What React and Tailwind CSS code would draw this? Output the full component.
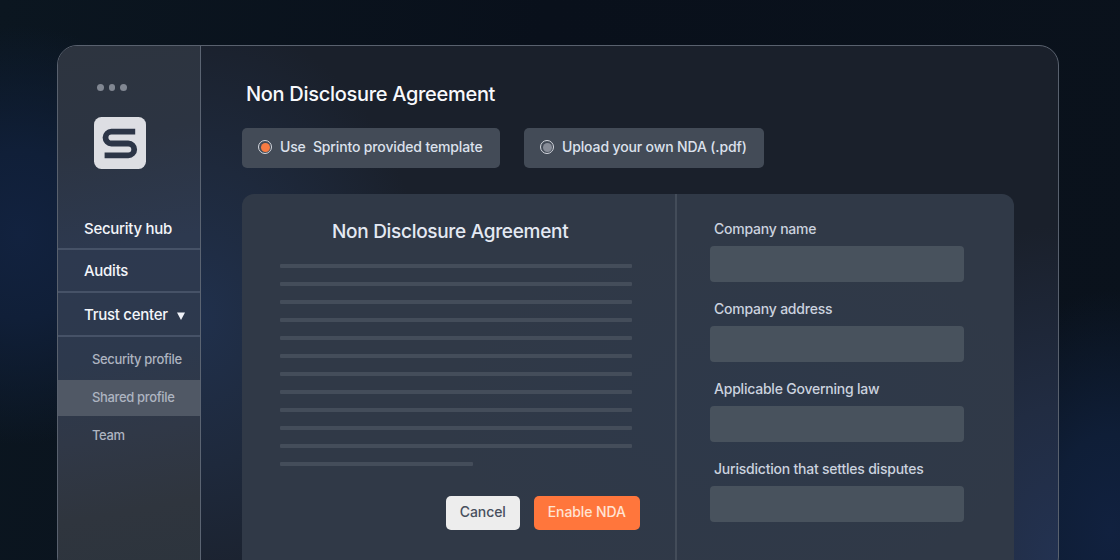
import React, { useState } from "react";

const navItems = ["Security hub", "Audits", "Trust center"];
const subItems = ["Security profile", "Shared profile", "Team"];
const fields = [
  "Company name",
  "Company address",
  "Applicable Governing law",
  "Jurisdiction that settles disputes",
];

const Logo = () => (
  <svg viewBox="0 0 52 52" className="ml-9 mt-[26px] block h-[52px] w-[52px]">
    <rect width="52" height="52" rx="7.5" fill="#dddee3" />
    <path
      d="M41.200 14.700H17.400a5.900 5.900 0 0 0 0 11.800H34.300a5.900 5.900 0 0 1 0 11.800H10.600"
      fill="none"
      stroke="#2c3547"
      strokeWidth="5.8"
    />
  </svg>
);

const Sidebar = ({ active, setActive }) => (
  <aside className="flex w-[143px] shrink-0 flex-col border-r border-[#5b6472] bg-[linear-gradient(170deg,#2d343f_0%,#2c3442_18%,#2d394f_38%,#2d394d_58%,#303847_72%,#2f353e_86%,#2c343d_100%)]">
    <div className="mt-[38px] ml-[39px] flex gap-[5px]">
      <span className="size-[6.5px] rounded-full bg-[#818792]" />
      <span className="size-[6.5px] rounded-full bg-[#818792]" />
      <span className="size-[6.5px] rounded-full bg-[#818792]" />
    </div>
    <Logo />
    <nav className="mt-[37px]">
      {navItems.map((item) => (
        <button
          key={item}
          className="flex h-11 w-full items-center border-b-2 border-[#465267] pt-1 pl-[26px] text-[15px] font-medium tracking-[-0.27px] text-[#f3f5fa] first:pt-[5px] nth-[2]:h-[43px] nth-[2]:pt-[2px]"
        >
          {item}
          {item === "Trust center" && (
            <svg viewBox="0 0 8 8" className="ml-[9px] mt-[1px] size-2">
              <path d="M0 0.5h8L4 8z" fill="#f0f2f8" />
            </svg>
          )}
        </button>
      ))}
    </nav>
    <div className="mt-[5px]">
      {subItems.map((item) => (
        <button
          key={item}
          onClick={() => setActive(item)}
          className={`mb-[2px] flex h-9 w-full items-center pl-[34px] text-[13px] font-medium tracking-[-0.35px] text-[#adb4c0] ${
            active === item ? "bg-[#505865]" : ""
          }`}
        >
          {item}
        </button>
      ))}
    </div>
  </aside>
);

const Option = ({ label, checked, onSelect, className }) => (
  <button
    onClick={onSelect}
    className={`flex h-10 items-center rounded-[5px] bg-[#434b57] pl-4 pb-[2px] text-sm font-medium text-[#dce1ec] ${className}`}
  >
    <span className="mr-2 flex size-[14px] shrink-0 items-center justify-center rounded-full border border-[#d5d8df]">
      <span className={`size-[9px] rounded-full ${checked ? "bg-[#f77b42]" : "bg-[#888d98]"}`} />
    </span>
    <span className="whitespace-pre">{label}</span>
  </button>
);

const Template = () => (
  <section className="w-[435px] shrink-0 border-r-2 border-[#434c59]">
    <h2 className="mt-6 ml-[90px] whitespace-nowrap text-[19px] leading-7 tracking-[-0.3px] font-medium text-[#e4e9f3]">
      Non Disclosure Agreement
    </h2>
    <div className="mt-[18px] ml-[38px] flex flex-col gap-[14px]">
      {Array.from({ length: 11 }).map((_, i) => (
        <div key={i} className="h-1 w-[352px] rounded-[1px] bg-[#444d5a]" />
      ))}
      <div className="h-1 w-[193px] rounded-[1px] bg-[#444d5a]" />
    </div>
    <div className="mt-[30px] mr-[35px] flex justify-end gap-[13.5px] text-sm font-medium tracking-[-0.1px]">
      <button className="h-[34px] w-[74.5px] rounded-[5px] bg-[#ededed] pb-[2px] text-[#474f5d]">
        Cancel
      </button>
      <button className="h-[34px] w-[106.5px] rounded-[5px] bg-[#ff763c] pb-[2px] text-[#ffe3d3]">
        Enable NDA
      </button>
    </div>
  </section>
);

const Details = () => (
  <section className="flex flex-col gap-4 pt-6 pl-[33px]">
    {fields.map((field) => (
      <label key={field} className="block text-sm tracking-[-0.22px] text-[#cbd2df]">
        <span className="block h-7 pl-1 leading-[22px] font-medium">{field}</span>
        <input className="block h-9 w-[254px] rounded-[4px] bg-[#48525d] px-3 outline-none" />
      </label>
    ))}
  </section>
);

const App = () => {
  const [active, setActive] = useState("Shared profile");
  const [source, setSource] = useState("template");

  return (
    <div className="h-[560px] w-[1120px] overflow-hidden bg-[#080f1a] bg-[radial-gradient(ellipse_180px_210px_at_20px_235px,#12223f_0%,#101f38_40%,transparent_100%),radial-gradient(ellipse_150px_240px_at_1110px_530px,#11213f_0%,#0f1e37_40%,transparent_100%),linear-gradient(100deg,#0b1620_0%,#09101b_45%,#0a121c_100%)] pt-[45px] pl-[57px] font-['Inter','Open_Sans',sans-serif]">
      <div className="flex h-[532px] w-[1002px] overflow-hidden rounded-[20px] border border-[#59616e] bg-[#1a202b] bg-[radial-gradient(ellipse_230px_300px_at_140px_270px,#20304c_0%,#1e293c_50%,transparent_100%),radial-gradient(ellipse_220px_330px_at_1000px_510px,#233251_0%,#212c42_45%,transparent_100%)]">
        <Sidebar active={active} setActive={setActive} />
        <main className="flex grow flex-col pl-[41px]">
          <h1 className="mt-[33px] ml-1 text-xl leading-[30px] font-medium tracking-[-0.3px] text-[#f8f9fc]">
            Non Disclosure Agreement
          </h1>
          <div className="mt-[19px] flex gap-6">
            <Option
              label="Use  Sprinto provided template"
              checked={source === "template"}
              onSelect={() => setSource("template")}
              className="w-[258px] tracking-[-0.14px]"
            />
            <Option
              label="Upload your own NDA (.pdf)"
              checked={source === "upload"}
              onSelect={() => setSource("upload")}
              className="w-60 tracking-[-0.14px]"
            />
          </div>
          <div className="mt-[26px] flex w-[772px] grow rounded-t-xl bg-[#303947] bg-[radial-gradient(ellipse_300px_180px_at_500px_220px,#2e394a_0%,transparent_100%)]">
            <Template />
            <Details />
          </div>
        </main>
      </div>
    </div>
  );
};

export default App;
